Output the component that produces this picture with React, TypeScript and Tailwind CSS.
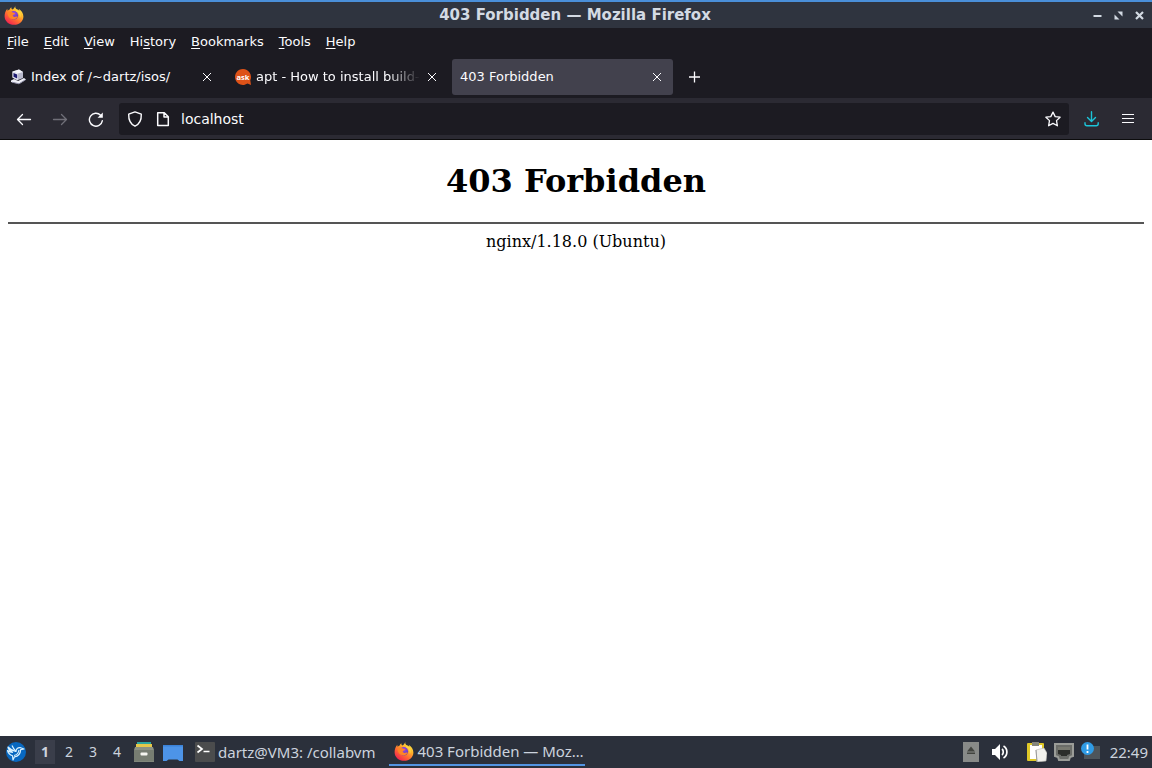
import React from "react";

const barFont = "font-['DejaVu_Sans',sans-serif]";

function FirefoxLogo({ id, className }: { id: string; className: string }) {
  return (
    <svg viewBox="0 0 20 20" className={className} aria-hidden="true">
      <defs>
        <linearGradient id={`${id}-flame`} x1="0.85" y1="0.1" x2="0.25" y2="0.95">
          <stop offset="0" stopColor="#fff04a" />
          <stop offset="0.35" stopColor="#ffb02a" />
          <stop offset="0.65" stopColor="#ff6a32" />
          <stop offset="1" stopColor="#f3264f" />
        </linearGradient>
        <radialGradient id={`${id}-globe`} cx="0.5" cy="0.3" r="0.8">
          <stop offset="0" stopColor="#a04be0" />
          <stop offset="1" stopColor="#5038b8" />
        </radialGradient>
      </defs>
      <path
        d="M11.400 .4C10.800 2.100 11.600 3.200 12.600 4.200C13.600 4.700 14.600 5.100 15.300 6C15.200 5.100 14.900 4.400 14.500 3.700C17.400 5.300 19.400 8.200 19.400 11.500C19.400 16.200 15.300 19.800 10.100 19.800S.6 16.100 .6 11.200C.6 8.400 1.400 6 3.300 3.700C3.300 4.700 3.400 5.200 3.700 5.800C4.200 5.200 4.900 4.800 5.700 4.600C5.900 3.600 6.500 2.800 7.300 2.200C7.200 3.200 7.500 4 8.200 4.500C9.700 3.900 11 2.300 11.400 .4Z"
        fill={`url(#${id}-flame)`}
      />
      <circle cx="9.8" cy="10.2" r="4.300" fill={`url(#${id}-globe)`} />
      <path d="M3.500 7.600C5.200 6 7.800 6.200 9 7.700C10.200 7.700 11 7.900 11.200 8.400C10.700 9.400 9.600 9.500 8.800 10.100C8.500 11.400 10 12.300 11.500 11.700C12.500 11.300 13.200 11.500 13.400 11.900C12.400 13.800 10.400 14.700 8.400 14.300C5.200 13.700 3.500 11 3.500 7.600Z" fill="#ff8426" />
      <path d="M12.600 4.200C16.600 6 18 9.200 15.900 13.300C16 10 14.700 7.900 12.500 6.700C11.600 6.200 11.700 5 12.600 4.200Z" fill="#ffd43b" />
    </svg>
  );
}

function Cross() {
  return (
    <svg viewBox="0 0 16 16" className="size-4" fill="none" stroke="currentColor" strokeWidth="1" aria-hidden="true">
      <path d="M4 4l8 8M12 4l-8 8" />
    </svg>
  );
}

function ServerIcon() {
  return (
    <svg viewBox="0 0 16 16" className="size-4 shrink-0" aria-hidden="true">
      <path d="M2.500 2.500L9 .5l4 2.500v6l-6 2.500-4.500-3z" fill="#b9b9cb" />
      <path d="M2.500 2.500L9 .5l4 2.500-5 1.500z" fill="#f6f6fb" />
      <path d="M2.500 2.500L8 4.500V11L2.500 8.500z" fill="#e8e8f2" />
      <path d="M3.500 4l3.700 1.400v4L3.500 7.800z" fill="#1e1a70" />
      <path d="M1 11.500l3-1.500 4 2 6-3 2 1.500-7 4.500-8-2z" fill="#eeeef6" />
      <path d="M2 13.200l7 1.600 6.500-4" fill="none" stroke="#8888a0" />
    </svg>
  );
}

function AskIcon() {
  return (
    <svg viewBox="0 0 16 16" className="size-4 shrink-0" aria-hidden="true">
      <path d="M8 0a8 8 0 1 0 4.500 14.600L16 16l-.7-4.700A8 8 0 0 0 8 0z" fill="#dd5218" />
      <text x="8" y="10.500" textAnchor="middle" fontSize="7.500" fontWeight="700" fill="#fff" fontFamily="Open Sans, sans-serif">
        ask
      </text>
    </svg>
  );
}

const menus: [string, string, string][] = [
  ["", "F", "ile"],
  ["", "E", "dit"],
  ["", "V", "iew"],
  ["Hi", "s", "tory"],
  ["", "B", "ookmarks"],
  ["", "T", "ools"],
  ["", "H", "elp"],
];

function TitleBar() {
  return (
    <header className="grid h-7 grid-cols-[1fr_auto_1fr] items-center border-t-2 border-[#4a8fd9] bg-[#2f343f] pr-[6px] pl-1">
      <FirefoxLogo id="title" className="size-5" />
      <h2 className="text-[15px] leading-5 font-bold text-[#d3dae3]">403 Forbidden — Mozilla Firefox</h2>
      <div className="flex justify-end gap-2 text-[#d3dae3]">
        <button aria-label="Minimize" className="size-[13px]">
          <svg viewBox="0 0 13 13" className="size-[13px]"><path d="M2.500 6h8v2h-8z" fill="currentColor" /></svg>
        </button>
        <button aria-label="Restore" className="size-[13px]">
          <svg viewBox="0 0 13 13" className="size-[13px]"><path d="M5.500 2.500h5v5zM2.500 5.500v5h5z" fill="currentColor" /></svg>
        </button>
        <button aria-label="Close" className="size-[13px]">
          <svg viewBox="0 0 13 13" className="size-[13px]"><path d="M3 3l7 7M10 3l-7 7" stroke="currentColor" strokeWidth="2.200" /></svg>
        </button>
      </div>
    </header>
  );
}

type TabProps = { title: string; icon?: React.ReactNode; active?: boolean; fade?: boolean };

function Tab({ title, icon, active = false, fade = false }: TabProps) {
  return (
    <div className={`flex h-9 w-[221px] items-center rounded-[3px] px-2 ${active ? "bg-[#42414d]" : ""}`}>
      <button role="tab" aria-selected={active} className="flex min-w-0 flex-1 items-center gap-[5px] text-left">
        {icon}
        <span className={`whitespace-nowrap ${fade ? "[mask-image:linear-gradient(to_left,transparent,black_32px)]" : ""}`}>{title}</span>
      </button>
      <button aria-label={`Close ${title}`} className="size-4 shrink-0">
        <Cross />
      </button>
    </div>
  );
}

const tool = "flex size-8 items-center justify-center";
const glyph = "size-4";

function Toolbar() {
  return (
    <div className="flex h-[42px] items-center border-b border-[#0c0c0d] bg-[#2b2a33] px-2">
      <div className="mr-[7px] flex gap-1">
        <button aria-label="Back" className={tool}>
          <svg viewBox="0 0 16 16" className={glyph} fill="none" stroke="currentColor" strokeWidth="1.300" strokeLinecap="round" strokeLinejoin="round"><path d="M14.500 8.500h-13M6.500 3.500l-5 5 5 5" /></svg>
        </button>
        <button aria-label="Forward" disabled className={`${tool} text-[#706f78]`}>
          <svg viewBox="0 0 16 16" className={glyph} fill="none" stroke="currentColor" strokeWidth="1.300" strokeLinecap="round" strokeLinejoin="round"><path d="M1.500 8.500h13M9.500 3.500l5 5-5 5" /></svg>
        </button>
        <button aria-label="Reload" className={tool}>
          <svg viewBox="0 0 16 16" className={glyph} fill="none" stroke="currentColor" strokeWidth="1.400" strokeLinecap="round"><path d="M14.300 9.800A6.500 6.500 0 1 1 12.600 4.200" /><path d="M14.800 1.500v5.200H9.600z" fill="currentColor" stroke="none" /></svg>
        </button>
      </div>
      <div className="flex h-8 min-w-0 flex-1 items-center rounded-[3px] bg-[#1c1b22] px-2">
        <button aria-label="Tracking protection" className="size-4">
          <svg viewBox="0 0 16 16" className={glyph} fill="none" stroke="currentColor" strokeWidth="1.400" strokeLinejoin="round"><path d="M8 .9l6.300 2.300c.2 5-1.500 9.700-6.300 12C3.200 12.900 1.500 8.200 1.700 3.200z" /></svg>
        </button>
        <button aria-label="Site information" className="ml-3 size-4">
          <svg viewBox="0 0 16 16" className={glyph} fill="none" stroke="currentColor" strokeWidth="1.500" strokeLinejoin="round"><path d="M2.700 1.700h6.600l4 4v8.800H2.700zM9 1.700V6h4.300" /></svg>
        </button>
        <input aria-label="Address" defaultValue="localhost" className="ml-[10px] min-w-0 flex-1 bg-transparent text-sm leading-5 outline-none" />
        <button aria-label="Bookmark this page" className="size-4">
          <svg viewBox="0 0 16 16" className={glyph} fill="none" stroke="currentColor" strokeWidth="1.300" strokeLinejoin="round"><path d="M8 1.100l2.200 4.500 4.900.6-3.600 3.400.9 5.200L8 12.400l-4.400 2.400.9-5.200L.9 6.200l4.900-.6z" /></svg>
        </button>
      </div>
      <div className="ml-[7px] flex gap-1">
        <button aria-label="Downloads" className={`${tool} text-[#1cc4d8]`}>
          <svg viewBox="0 0 16 16" className={glyph} fill="none" stroke="currentColor" strokeWidth="1.400" strokeLinecap="round" strokeLinejoin="round"><path d="M7.500 .7v9.600M3.500 6.500l4 4 4-4M1 11.700v1a2 2 0 0 0 2 2h9.200a2 2 0 0 0 2-2v-1" /></svg>
        </button>
        <button aria-label="Application menu" className={tool}>
          <svg viewBox="0 0 16 16" className={glyph} fill="none" stroke="currentColor" strokeWidth="1.200"><path d="M2 3.500h12M2 7.500h12M2 11.500h12" /></svg>
        </button>
      </div>
    </div>
  );
}

function Taskbar() {
  return (
    <footer className="flex h-8 items-center bg-[#2b303b] font-['Noto_Sans',sans-serif] text-sm text-[#ccd3de]">
      <button aria-label="Start menu" className="ml-[6px] size-5">
        <svg viewBox="0 0 20 20" className="size-5">
          <circle cx="10" cy="10" r="10" fill="#0868c0" />
          <path d="M2 5c3 3 5 4 8 4.500 0-2.500 1.700-4.200 4.500-3.800L18 7l-3.300.6c-.3 4.400-2.700 6.700-6.200 7.200L7 18l-.5-4.200C4 13 2.200 11.200 1.500 8.500c2 1.500 3.500 1.800 5 1.800C4.200 9 2.500 7.200 2 5z" fill="none" stroke="#d8f1ff" strokeWidth="1.200" strokeLinejoin="round" />
          <path d="M6 3.500c1 2.500 2 4 4 6M13 8c-.5 3-2 5-5 5.500" fill="none" stroke="#d8f1ff" strokeWidth="1.200" />
        </svg>
      </button>
      <nav aria-label="Desktops" className="ml-[9px] flex items-center gap-1">
        <button className="h-6 w-5 bg-[#3a3e4a] font-bold">1</button>
        <button className="h-6 w-5">2</button>
        <button className="h-6 w-5">3</button>
        <button className="h-6 w-5">4</button>
      </nav>
      <button aria-label="File manager" className="ml-[7px] size-5">
        <svg viewBox="0 0 20 20" className="size-5">
          <path d="M3 0h14v4H3z" fill="#2ba6a0" />
          <path d="M2 2h16v4H2z" fill="#e5c84a" />
          <path d="M1 5h18l1 3v12H0V8z" fill="#8b9184" />
          <path d="M0 8h20v11.500H0z" fill="#777d72" />
          <rect x="6.500" y="10.500" width="7" height="3" rx="1" fill="#f5f5f0" />
        </svg>
      </button>
      <button aria-label="Show desktop" className="ml-[9px] size-5">
        <svg viewBox="0 0 20 20" className="size-5">
          <path d="M0 3h20v16h-3.500l-2-1.500h-9L3.500 19H0z" fill="#4d94e8" />
          <path d="M0 3h20v1.500H0z" fill="#3b82d8" />
        </svg>
      </button>
      <button className="ml-3 flex items-center gap-[3px] text-[15px] leading-5">
        <svg viewBox="0 0 20 20" className="size-5" aria-hidden="true">
          <rect width="20" height="20" rx="1" fill="#4b4c4d" />
          <path d="M2.500 3.500L7 7l-4.500 3.500M8.500 9.500h6" fill="none" stroke="#fff" strokeWidth="1.700" />
        </svg>
        dartz@VM3: /collabvm
      </button>
      <button className="ml-[14px] flex h-[30px] w-[196px] items-center gap-[3px] self-start border-b-2 border-[#5294e2] pt-[2px] pl-[5px] text-[15px] leading-5">
        <FirefoxLogo id="task" className="size-5" />
        403 Forbidden — Moz…
      </button>
      <div className="ml-auto flex items-center pr-1">
        <button aria-label="Removable media" className="mr-[13px] flex h-5 w-4">
          <svg viewBox="0 0 16 20" className="h-5 w-4"><path d="M0 0h16v20H0z" fill="#888a88" /><path d="M8 4.500l4 5H4zM4 10.500h8V12H4z" fill="#42443f" /></svg>
        </button>
        <button aria-label="Volume" className="mr-[19px] size-4">
          <svg viewBox="0 0 16 16" className="size-4"><path d="M0 5h3l5-5v16l-5-5H0z" fill="#fff" /><path d="M10 5c1.700 1.500 1.700 4.500 0 6M11.500 2c4.500 2.500 4.500 9.500 0 12" fill="none" stroke="#fff" strokeWidth="1.700" /></svg>
        </button>
        <button aria-label="Clipboard" className="mr-[7px] size-5">
          <svg viewBox="0 0 20 20" className="size-5">
            <rect y="1" width="17" height="18" rx="1" fill="#dfc827" />
            <path d="M3 3h12v14H3z" fill="#fff" />
            <path d="M5 0h7v4H5z" fill="#85867c" />
            <path d="M9 8l8-2 3 5-1 8-9 1z" fill="#f1f1ed" stroke="#b8b8b2" strokeWidth=".6" />
            <path d="M9 8l1 12" stroke="#999" />
          </svg>
        </button>
        <button aria-label="Wired network" className="mr-[7px] size-5">
          <svg viewBox="0 0 20 20" className="size-5"><path d="M1 2h18v12l-3 1-1 3H5l-1-3-3-1z" fill="#6b6d69" stroke="#9a9c98" strokeWidth="2" /><path d="M4 5h12v7l-3 1v1H7v-1l-3-1z" fill="#2b2d2a" /><path d="M5 5v3M7 5v3M9 5v3M11 5v3M13 5v3M15 5v3" stroke="#c8c8b8" /></svg>
        </button>
        <button aria-label="Update notifier" className="mr-[9px] size-5">
          <svg viewBox="0 0 20 20" className="size-5"><path d="M8 4h11v13H3v-6z" fill="#4d555b" /><circle cx="6.500" cy="6.500" r="6.500" fill="#2f9be5" /><path d="M6.500 2.500v5M6.500 9v2" stroke="#fff" strokeWidth="1.800" /></svg>
        </button>
        <time className="text-[15px] leading-5">22:49</time>
      </div>
    </footer>
  );
}

export default function App() {
  return (
    <div className="flex min-h-screen flex-col bg-white">
      <div className={`${barFont} bg-[#1c1b22] text-[13px] leading-5 text-[#fbfbfe]`}>
        <TitleBar />
        <nav aria-label="Menu bar" className="flex h-7 items-center gap-[15px] px-[7px]">
          {menus.map(([before, key, after]) => (
            <button key={key + after}>
              {before}
              <span className="underline underline-offset-2">{key}</span>
              {after}
            </button>
          ))}
        </nav>
        <div role="tablist" className="flex h-[42px] items-center gap-1 px-[2px]">
          <Tab title="Index of /~dartz/isos/" icon={<ServerIcon />} />
          <Tab title="apt - How to install build-" icon={<AskIcon />} fade />
          <Tab title="403 Forbidden" active />
          <button aria-label="New tab" className="ml-1 flex size-7 items-center justify-center">
            <svg viewBox="0 0 16 16" className="size-4" fill="none" stroke="currentColor" strokeWidth="1.300"><path d="M7.500 2.500v11M2 8h11" /></svg>
          </button>
        </div>
        <Toolbar />
      </div>
      <main className="flex-1 px-2 pt-[21px] text-center font-['DejaVu_Serif',serif] text-base text-black">
        <h1 className="text-[32px] leading-10 font-bold">403 Forbidden</h1>
        <hr className="mt-[21px] mb-2 border-t-2 border-[#555]" />
        <p className="leading-5">nginx/1.18.0 (Ubuntu)</p>
      </main>
      <Taskbar />
    </div>
  );
}
